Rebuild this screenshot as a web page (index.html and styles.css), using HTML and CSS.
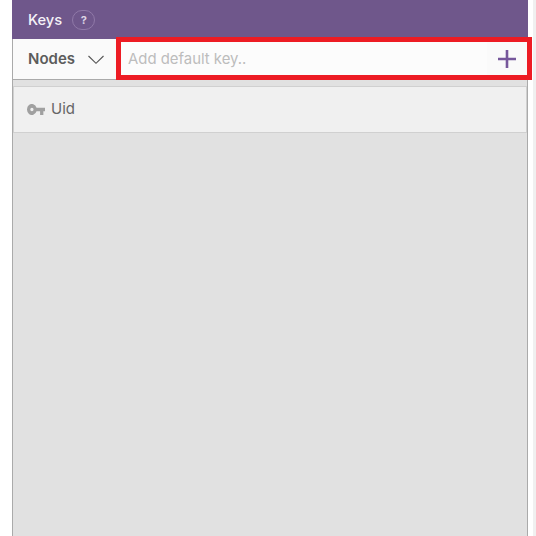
FILE: index.html
```html
<!DOCTYPE html>
<html lang="en">
<head>
<meta charset="utf-8">
<title>Keys</title>
<link rel="stylesheet" href="styles.css">
</head>
<body>
<main class="panel">
  <header class="header"><span>Keys</span><span class="help">?</span></header>
  <div class="content">
    <div class="toolbar">
      <div class="select"><span>Nodes</span>
        <svg class="chevron" width="16" height="10" viewBox="0 0 16 10"><path d="M.5 1 8 8.3 15.500 1" fill="none" stroke="#555" stroke-width="1.100"/></svg>
      </div>
      <div class="field">Add default key..</div>
      <div class="add"><svg width="18" height="18" viewBox="0 0 18 18"><path d="M9 0v18M0 9h18" stroke="#76579b" stroke-width="2.600"/></svg></div>
      <div class="highlight"></div>
    </div>
    <div class="item">
      <svg class="key" width="18" height="11" viewBox="0 0 22 12" preserveAspectRatio="none"><path fill="#a0a0a0" d="M11.650 4A6 6 0 1 0 11.650 8H16v4h4V8h2V4zM6 8a2 2 0 1 1 0-4 2 2 0 0 1 0 4z"/></svg>
      <span>Uid</span>
    </div>
  </div>
</main>
<div class="edge"></div>
</body>
</html>
```
FILE: styles.css
```css
* { box-sizing: border-box; }
body {
  margin: 0;
  height: 536px;
  display: flex;
  overflow: hidden;
  background: #fff;
  font-family: Inter, sans-serif;
  font-size: 15px;
}
.panel {
  width: 516px;
  margin-left: 12px;
  display: flex;
  flex-direction: column;
}
.header {
  height: 39px;
  padding-left: 16px;
  display: flex;
  align-items: center;
  gap: 10px;
  background: #6f578b;
  color: #f5f2f8;
  font-size: 14.700px;
  font-weight: 500;
}
.help {
  width: 23px;
  height: 20px;
  margin-top: 1px;
  border: 1px solid #9079a8;
  border-radius: 10px;
  font-size: 11px;
  font-weight: 700;
  line-height: 18px;
  text-align: center;
  color: #ddd5e5;
}
.content {
  flex: 1;
  border: solid #aaa;
  border-width: 0 1px;
  background: #e1e1e1;
}
.toolbar {
  position: relative;
  height: 41px;
  display: flex;
  align-items: stretch;
  background: #fafafa;
  border-bottom: 1px solid #aaa;
}
.select {
  width: 107px;
  padding: 0 0 2px 15px;
  display: flex;
  align-items: center;
  gap: 13px;
  color: #5c5c5c;
  font-weight: 600;
}
.chevron { margin-top: 3px; }
.field {
  flex: 1;
  padding-left: 8px;
  line-height: 40px;
  background: #fcfcfc;
  color: #bdbdbd;
  font-size: 14.900px;
}
.add {
  width: 40px;
  display: flex;
  align-items: center;
  justify-content: center;
}
.highlight {
  position: absolute;
  left: 103px;
  top: -2px;
  width: 416px;
  height: 43px;
  border: 5px solid #ed1c24;
}
.item {
  height: 47px;
  margin-top: 6px;
  padding: 0 0 2px 13px;
  display: flex;
  align-items: center;
  gap: 6px;
  background: #f0f0f0;
  border: 1px solid #d0d0d0;
  color: #666;
}
.key { margin-top: 1px; }
.edge {
  width: 3px;
  margin-left: 5px;
  background: #f0f0f0;
}
```
